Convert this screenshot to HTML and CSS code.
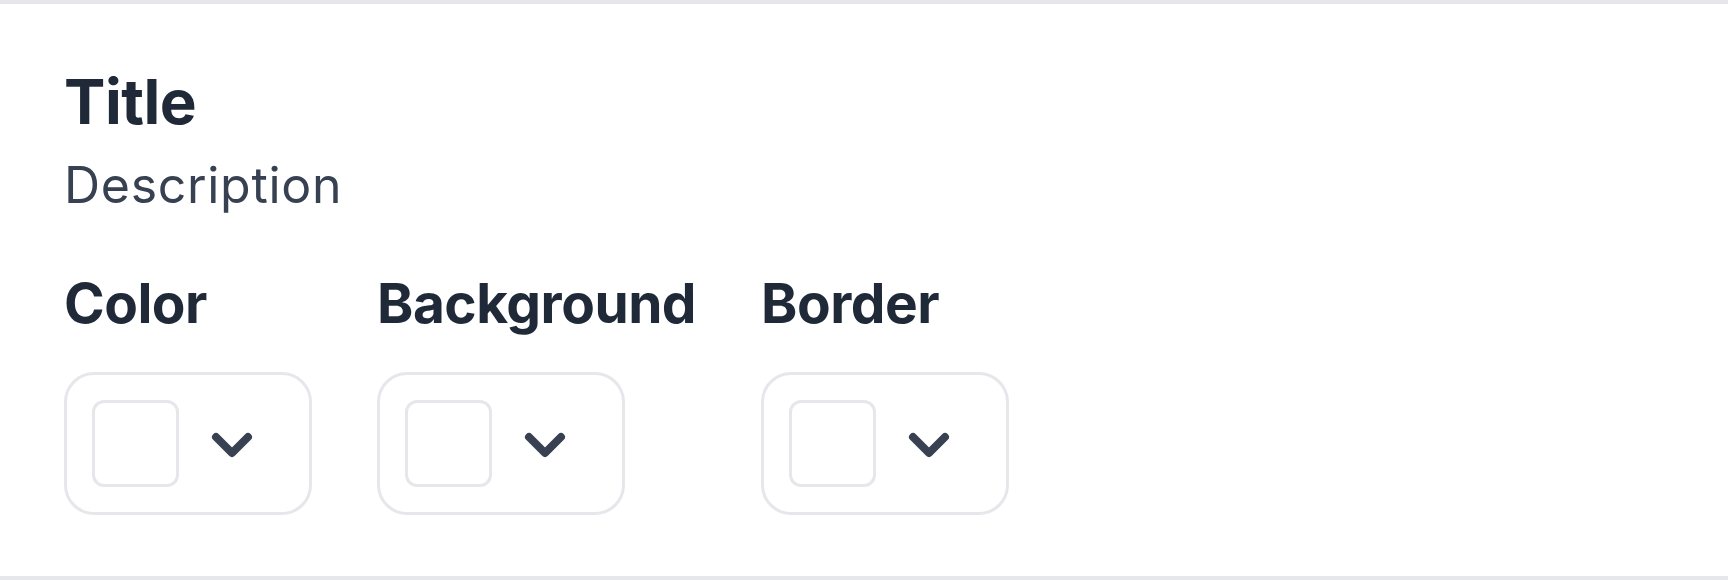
FILE: index.html
```html
<!DOCTYPE html>
<html lang="en">
<head>
<meta charset="utf-8">
<title>Title</title>
<link rel="stylesheet" href="styles.css">
</head>
<body>
<section class="panel">
  <h1 class="title">Title</h1>
  <p class="description">Description</p>
  <div class="fields">
    <div class="field">
      <div class="label">Color</div>
      <button class="picker" type="button">
        <span class="swatch"></span>
        <svg class="chevron" width="48" height="48" viewBox="0 0 48 48" aria-hidden="true"><path d="M8 17 L24 33 L40 17" fill="none" stroke="currentColor" stroke-width="8" stroke-linecap="round" stroke-linejoin="round"/></svg>
      </button>
    </div>
    <div class="field">
      <div class="label">Background</div>
      <button class="picker" type="button">
        <span class="swatch"></span>
        <svg class="chevron" width="48" height="48" viewBox="0 0 48 48" aria-hidden="true"><path d="M8 17 L24 33 L40 17" fill="none" stroke="currentColor" stroke-width="8" stroke-linecap="round" stroke-linejoin="round"/></svg>
      </button>
    </div>
    <div class="field">
      <div class="label">Border</div>
      <button class="picker" type="button">
        <span class="swatch"></span>
        <svg class="chevron" width="48" height="48" viewBox="0 0 48 48" aria-hidden="true"><path d="M8 17 L24 33 L40 17" fill="none" stroke="currentColor" stroke-width="8" stroke-linecap="round" stroke-linejoin="round"/></svg>
      </button>
    </div>
  </div>
</section>
</body>
</html>
```

FILE: styles.css
```css
html, body {
  margin: 0;
  padding: 0;
  background: #ffffff;
}

.panel {
  box-sizing: border-box;
  height: 580px;
  border-top: 4px solid #e5e7eb;
  border-bottom: 4px solid #e5e7eb;
  padding: 67px 64px 61px 64px;
  display: flex;
  flex-direction: column;
  align-items: flex-start;
}

.title {
  margin: 0 0 27px 0;
  font-family: "Inter", "Liberation Sans", sans-serif;
  font-weight: 700;
  font-size: 62px;
  line-height: 62px;
  letter-spacing: -0.5px;
  color: #1f2937;
}

.description {
  margin: 0 0 66px 0;
  font-family: "Inter", "Liberation Sans", sans-serif;
  font-weight: 400;
  font-size: 50px;
  line-height: 50px;
  letter-spacing: 0.7px;
  color: #374151;
}

.fields {
  display: flex;
  gap: 65px;
}

.field {
  display: flex;
  flex-direction: column;
  gap: 41px;
}

.label {
  font-family: "Inter", "Liberation Sans", sans-serif;
  font-weight: 700;
  font-size: 55px;
  line-height: 55px;
  letter-spacing: -0.5px;
  color: #1f2937;
  white-space: nowrap;
}

.picker {
  box-sizing: border-box;
  display: flex;
  align-items: center;
  gap: 29px;
  width: 248px;
  height: 143px;
  margin: 0;
  padding: 25px 53px 25px 25px;
  border: 3px solid #e5e7eb;
  border-radius: 30px;
  background: #ffffff;
  color: #374151;
  cursor: pointer;
}

.swatch {
  box-sizing: border-box;
  flex: none;
  width: 87px;
  height: 87px;
  border: 3px solid #e5e7eb;
  border-radius: 12px;
}

.chevron {
  flex: none;
  display: block;
}
```
